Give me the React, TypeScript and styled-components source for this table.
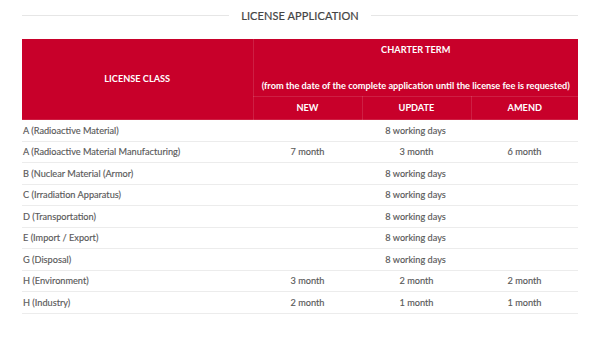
import React from "react";
import styled, { createGlobalStyle } from "styled-components";

const Global = createGlobalStyle`
  html, body { margin: 0; padding: 0; background: #ffffff; }
  body { font-family: Lato, "Open Sans", sans-serif; }
`;

const Page = styled.div`
  width: 604px;
  height: 341px;
  box-sizing: border-box;
  padding: 6px 26px 0 22px;
  display: flex;
  flex-direction: column;
  gap: 15px;
`;

const TitleBar = styled.div`
  display: flex;
  align-items: center;
  gap: 12px;
  height: 18px;
`;

const Rule = styled.div`
  flex: 1;
  height: 1px;
  background: #e6e6e6;
`;

const Title = styled.h2`
  margin: 0;
  font-family: Lato, sans-serif;
  font-size: 11px;
  font-weight: 400;
  letter-spacing: 0.1px;
  color: #444444;
  white-space: nowrap;
  -webkit-text-stroke: 0.2px #444444;
`;

const Table = styled.table`
  width: 556px;
  border-collapse: collapse;
  table-layout: fixed;
  font-family: Lato, sans-serif;
  font-size: 9.2px;
`;

const Head = styled.thead`
  background: #c8002a;
  color: #ffffff;
`;

const Th = styled.th<{ $tall?: boolean }>`
  font-weight: 700;
  text-align: center;
  padding: ${(p) => (p.$tall ? "2px 4px 1px" : "0 4px")};
  height: ${(p) => (p.$tall ? "auto" : "22px")};
  line-height: 18px;
  border: 1px solid rgba(255, 255, 255, 0.12);
  border-top: none;
  white-space: nowrap;
  &:first-child { border-left: none; }
  &:last-child { border-right: none; }
`;

const Row = styled.tr`
  border-bottom: 1px solid #ececec;
`;

const Td = styled.td<{ $label?: boolean }>`
  height: 20.5px;
  padding: 0 ${(p) => (p.$label ? "0 0 1px" : "0")};
  text-align: ${(p) => (p.$label ? "left" : "center")};
  color: #5a5a5a;
  white-space: nowrap;
  -webkit-text-stroke: 0.15px #5a5a5a;
`;

type R = { label: string; values: string[] };

const rows: R[] = [
  { label: "A (Radioactive Material)", values: ["8 working days"] },
  { label: "A (Radioactive Material Manufacturing)", values: ["7 month", "3 month", "6 month"] },
  { label: "B (Nuclear Material (Armor)", values: ["8 working days"] },
  { label: "C (Irradiation Apparatus)", values: ["8 working days"] },
  { label: "D (Transportation)", values: ["8 working days"] },
  { label: "E (Import / Export)", values: ["8 working days"] },
  { label: "G (Disposal)", values: ["8 working days"] },
  { label: "H (Environment)", values: ["3 month", "2 month", "2 month"] },
  { label: "H (Industry)", values: ["2 month", "1 month", "1 month"] },
];

export default function App() {
  return (
    <>
      <Global />
      <Page>
        <TitleBar>
          <Rule />
          <Title>LICENSE APPLICATION</Title>
          <Rule />
        </TitleBar>
        <Table>
          <colgroup>
            <col style={{ width: 231 }} />
            <col style={{ width: 109 }} />
            <col style={{ width: 109 }} />
            <col style={{ width: 107 }} />
          </colgroup>
          <Head>
            <tr>
              <Th rowSpan={2}>LICENSE CLASS</Th>
              <Th colSpan={3} $tall>
                CHARTER TERM
                <br />
                <br />
                (from the date of the complete application until the license fee is requested)
              </Th>
            </tr>
            <tr>
              <Th>NEW</Th>
              <Th>UPDATE</Th>
              <Th>AMEND</Th>
            </tr>
          </Head>
          <tbody>
            {rows.map((r) => (
              <Row key={r.label}>
                <Td $label>{r.label}</Td>
                {r.values.length === 1 ? (
                  <Td colSpan={3}>{r.values[0]}</Td>
                ) : (
                  r.values.map((v, i) => <Td key={i}>{v}</Td>)
                )}
              </Row>
            ))}
          </tbody>
        </Table>
      </Page>
    </>
  );
}
